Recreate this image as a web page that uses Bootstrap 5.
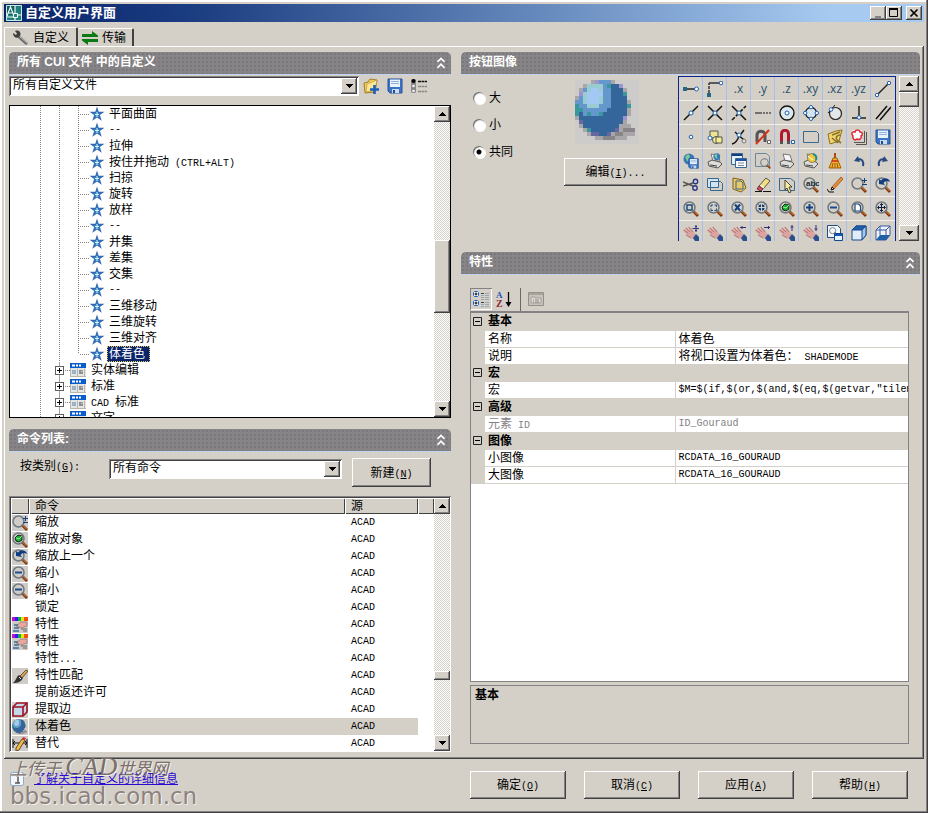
<!DOCTYPE html>
<html lang="zh-CN">
<head>
<meta charset="utf-8">
<meta name="viewport" content="width=device-width, initial-scale=1">
<title>自定义用户界面</title>
<link rel="stylesheet" href="https://cdn.jsdelivr.net/npm/bootstrap@5.3.0/dist/css/bootstrap.min.css">
<style>
:root{--face:#d4d0c8;--hi:#fff;--sh:#848284;--dk:#424142}
body{font-family:"Liberation Sans","Noto Sans CJK SC",sans-serif;font-size:12px;line-height:16px;color:#000;background:var(--face)}
svg{flex:none;display:block}
.ic{width:16px;height:16px}
.lat{font-family:"Liberation Mono",monospace;font-size:10px;white-space:pre}
span.lat{line-height:1}
.raised{background:var(--face);border:0;border-radius:0;box-shadow:inset -1px -1px var(--dk),inset 1px 1px var(--hi),inset -2px -2px var(--sh)}
.sunken{border:0;border-radius:0;box-shadow:inset 1px 1px var(--sh),inset -1px -1px var(--hi),inset 2px 2px var(--dk)}
.dialog{min-height:100vh;padding:4px;box-shadow:inset -1px -1px var(--dk),inset -2px -2px var(--sh),inset 2px 2px var(--hi)}
.titlebar{height:18px;padding:0 2px;background:linear-gradient(90deg,#0a246a,#1a3c80 20%,#a6caf0 90%);color:#fff}
.titlebar h1{font-size:13px;line-height:18px;font-weight:700;padding-left:3px}
.cap{width:16px;height:14px}
.tabs{padding-top:5px}
.tabbtn{background:none;border:0;border-top:1px solid var(--hi);border-right:2px solid var(--dk);height:18px;padding:0 6px 0 4px;border-radius:2px 2px 0 0;color:#000}
.tabbtn.on{height:20px;margin-bottom:-1px;border-left:1px solid var(--hi);background:var(--face);padding:0 7px}
.tabbtn.on span{padding-left:5px}
.page{box-shadow:inset -1px -1px var(--dk),inset 1px 1px var(--hi),inset -2px -2px var(--sh);padding:6px 4px 7px 5px}
.cols{display:grid;grid-template-columns:minmax(0,442fr) minmax(0,459fr);column-gap:10px}
.phead{height:23px;border-bottom:1px solid #c0d4f4;background:radial-gradient(#7a787a 30%,transparent 32%) 0 0/4px 4px,#868486;color:#fff;font-weight:700;border-radius:5px 5px 0 0;padding:0 5px 0 8px}
.phead h2{font-size:12px;line-height:20px;font-weight:700}
.phead button{background:none;border:0;padding:4px 0 0;color:#fff}
.filebar{padding:1px 0 9px}
.drop{position:relative}
.drop select{display:block;appearance:none;width:100%;height:20px;background:#fff;padding:0 20px 2px 4px;font-size:12px;line-height:16px;color:#000;outline:0}
.drop .arr{position:absolute;right:2px;top:2px;bottom:2px;width:16px;pointer-events:none}
.tri{width:7px;height:4px}
.sbar{width:16px;flex:none;background:repeating-conic-gradient(#fff 0 25%,#d4d0c8 0 50%) 0 0/2px 2px}
.sbar button{height:16px;padding:0}
.sbar.wide{width:20px;margin-left:3px;height:165px}
.t1{flex:118}.t2{flex:73}.t3{flex:88}
.u1{flex:158}.u2{flex:9}.u3{flex:55}
.v1{height:15px}
.tree{height:313px;border:1px solid #000;background:#fff}
.trow{height:16px;padding-left:30px;white-space:nowrap}
.guide{width:19px;height:16px;display:flex;align-items:center}
.guide::before{content:"";width:1px;height:16px;background:repeating-linear-gradient(#848284 0 1px,#fff 1px 2px)}
.guide.stub{width:11px}
.guide.stub::after{content:"";flex:1;height:1px;margin-top:1px;background:repeating-linear-gradient(90deg,#fff 0 1px,#848284 1px 2px)}
.guide.end::before{height:8px;align-self:flex-start}
.guide.knob::before{width:9px;margin-left:-4px;background:linear-gradient(#000,#000) 2px 8px/5px 1px no-repeat,linear-gradient(#000,#000) 4px 6px/1px 5px no-repeat,linear-gradient(#fff,#fff) 1px 5px/7px 7px no-repeat,linear-gradient(#606060,#606060) 0 4px/9px 9px no-repeat,linear-gradient(90deg,transparent 4px,#a0a0a0 4px 5px,transparent 5px)}
.trow .nm{margin-left:2px;padding:0 2px;line-height:16px}
.trow.fold .nm{padding-left:3px}
.trow .sel{background:#0a246a;color:#fff;outline:1px dotted #e8c860;outline-offset:-1px;padding-right:5px}
.cmdbar{padding:6px 20px 9px 11px}
.cmdbar .catlabel{width:89px;flex:none}
.cmdbar .drop{margin-top:1px}
.newbtn{width:79px;height:29px;margin-left:10px;flex:none}
.list{height:256px;background:#fff;padding:2px 1px 1px 2px}
.list table,.props table{table-layout:fixed;width:100%;border-collapse:collapse;margin:0}
.list th{height:16px;padding:0 6px;font-weight:400;line-height:14px;background:var(--face);box-shadow:inset 1px 1px var(--hi),inset -1px -1px var(--dk)}
.list td{height:17px;padding:0 6px;line-height:15px;white-space:nowrap}
.list td:first-child{padding:0 0 0 1px}
.list .picked td:not(:first-child):not(:last-child){background:var(--face)}
.list td:first-child svg{background:#cfccc8}
.c1{width:18px}.c3{width:73px}.c4{width:16px}
.radios{width:91px;padding-top:8px}
.radiorow{height:27px}
.radiorow input{appearance:none;width:12px;height:12px;margin:0;border-radius:50%;background:#fff;box-shadow:inset 1px 1px 1px #606060,1px 1px #fff}
.radiorow input:checked{background:radial-gradient(#000 0 2px,#fff 3px)}
.imgbody{padding:1px 1px 11px 12px}
.editcol{width:103px}
.editcol .preview{margin:4px 0 14px 11px}
.editcol .cmd{height:28px}
.gal{display:grid;grid-template-columns:repeat(9,24px);grid-auto-rows:24px;height:165px;overflow:hidden;border:1px solid #0a2490;border-bottom:0}
.gal button{background:none;border:0;border-right:1px solid #a8c0e8;border-bottom:1px solid #f4f2ee;padding:0;display:flex;align-items:center;justify-content:center;color:#28506c;font-family:"Open Sans",sans-serif;font-size:12px;line-height:16px}
.gal button:nth-child(9n){border-right:0}
.preview{width:64px;height:64px;background:#cdcccb}
.cmd{font-size:12px;line-height:16px;padding:0;color:#000}
.propbox{padding:13px 11px 8px 9px}
.toolstrip{height:24px;border-bottom:1px solid var(--sh)}
.toolstrip button{background:none;border:0;padding:2px;height:22px}
.toolstrip button.on{box-shadow:inset 1px 1px var(--sh),inset -1px -1px var(--hi)}
.props{border:1px solid var(--sh);background:#fff;margin-bottom:3px}
.props th,.props td{height:17px;line-height:16px;padding:0 3px;white-space:nowrap;overflow:hidden;font-weight:400;border-bottom:1px solid var(--face)}
.props td{border-left:1px solid var(--face)}
.props .gut{background:var(--face);padding:0 0 0 2px;border-left:0}
.props .cat th{background:var(--face);font-weight:700}
.props .dim th,.props .dim td{color:#848284}
.p1{width:14px}.p2{width:190px}
.hint{height:59px;border:1px solid var(--sh);font-weight:700;padding:1px 4px}
.foot{height:50px;padding:12px 16px 0 6px}
.foot .cmd{flex:0 1 96px;height:28px}
.foot a{color:#2a0ad0}
.acts{column-gap:18px}
.more{width:440px;position:relative}
.wm{position:absolute;color:#8d827e;text-shadow:1px 1px #f2efea;pointer-events:none;white-space:nowrap;line-height:20px}
.wm-a{left:0;top:-14px;font:italic 17px/20px "Liberation Serif","Noto Sans CJK SC",serif;color:#7a6e6a}
.wm-a b{font-weight:400;font-size:26px}
.wm-b{left:0;top:15px;font-family:"DejaVu Sans",sans-serif;font-size:23px}
</style>
<script src="https://cdn.jsdelivr.net/npm/bootstrap@5.3.0/dist/js/bootstrap.bundle.min.js"></script>
</head>
<body>
<svg class="d-none" xmlns="http://www.w3.org/2000/svg">
<defs>
<linearGradient id="gsheet" x2="1" y2="1"><stop offset="0" stop-color="#fff"/><stop offset="1" stop-color="#9ec8e4"/></linearGradient>
<radialGradient id="glens" cx=".35" cy=".35"><stop offset="0" stop-color="#fff"/><stop offset="1" stop-color="#a4c8e0"/></radialGradient>
</defs>
<symbol id="up" viewBox="0 0 7 4"><path d="M3 0h1v1h1v1h1v1h1v1H0V3h1V2h1V1h1z"/></symbol>
<symbol id="down" viewBox="0 0 7 4"><path d="M0 0h7v1H6v1H5v1H4v1H3V3H2V2H1V1H0z"/></symbol>
<symbol id="chev" viewBox="0 0 8 11"><path d="M1 5l3-3 3 3M1 10l3-3 3 3" fill="none" stroke="#fff" stroke-width="1.400"/></symbol>
<symbol id="star" viewBox="0 0 16 16"><path d="M8 .5l1.700 5.200h5.800l-4.600 3.400 1.800 5.600L8 11.400l-4.700 3.300 1.800-5.600L.5 5.700h5.800z" fill="#3868b4"/><path d="M8 4l1 3.300h3L9.600 9l.9 3L8 10.300l-2.500 1.700.900-3L4 7.300h3z" fill="#2c88c8"/><path d="M8 6v5M6 8.500h4" stroke="#d0f4ff"/></symbol>
<symbol id="tbar" viewBox="0 0 16 16"><path fill="#0a5ccc" d="M0 1h16v5H0z"/><path fill="#fff" d="M2 2.500h3v2H2zM6 2.500h2v2H6zM9 2.500h2v2H9z"/><path fill="#e8e6e0" d="M0 6h16v8H0z"/><path fill="#b8b4b0" d="M0 14h16v1H0zM0 6h1v8H0zM7 7h1v7H7zM14 7h1v7h-1z"/><path fill="#90b4c8" d="M2 8h4v4H2z"/><path fill="#8890a0" d="M9 8h4v4H9z"/><path fill="#d8c890" d="M11 9h2v1h-2z"/><path fill="#c8a8d0" d="M3 9h1v2H3z"/></symbol>
<symbol id="minus" viewBox="0 0 9 9"><path d="M.5.5h8v8h-8z" fill="none" stroke="#202020"/><path d="M2 4.500h5" stroke="#000"/></symbol>
<symbol id="app" viewBox="0 0 16 16"><path fill="#20807c" d="M0 0h16v16H0z"/><path d="M0 0h9v10H0z" fill="#145c5c"/><path d="M1 11L4.500 2 8 11M2 8h5M9 0v10h7M9 10v6M0 12h8" stroke="#e8fffc" fill="none" stroke-width="1.200"/><path d="M.5.5h15v15H.5z" fill="none" stroke="#c8e8e4"/><path d="M7.500 8.500h4v4h-4z" fill="#20807c" stroke="#fff"/></symbol>
<symbol id="wrench" viewBox="0 0 16 16"><path d="M6 6l9 8" stroke="#686868" stroke-width="3"/><path d="M7 6l8 7" stroke="#c4c4c4"/><path d="M1 3l3 2 1-1.500L3 1c3-1 5 0 5.500 2.500C9 6 6 8.500 3.500 7.500 2 7 1 5 1 3z" fill="#404040"/></symbol>
<symbol id="swap" viewBox="0 0 16 16"><path d="M0 4h10V1l6 4.500v1.500H0zM16 12H6v3L0 10.500V9h16z" fill="#0a7a14"/></symbol>
<symbol id="folder" viewBox="0 0 16 16"><path d="M1 5l4-1 2-3 7 1-2 12-10 1z" fill="#f0cc58" stroke="#a08028"/><path d="M4 6l10-4-2 10-9 2z" fill="#fae898" stroke="#b08c30" stroke-width=".6"/><path d="M11.500 7v9M7 11.500h9" stroke="#1c60b8" stroke-width="2.600"/></symbol>
<symbol id="disk" viewBox="0 0 16 16"><path d="M1 1h14v14H3l-2-2z" fill="#3c74c4" stroke="#28509c"/><path d="M3 1.500h10V9H3z" fill="#e8f2fa"/><path d="M4 3.500h8M4 5.500h8" stroke="#90b4dc"/><path d="M5 11h7v4H5z" fill="#c8dcf0"/><path d="M6 12h2v3H6z" fill="#284c90"/></symbol>
<symbol id="opts" viewBox="0 0 16 16"><path d="M0 2l1-1h3l1 1v12l-1 1H1l-1-1z" fill="#888"/><circle cx="2.500" cy="3" r="2" fill="#000"/><circle cx="2.500" cy="8" r="1.300" fill="#eee"/><circle cx="2.500" cy="13" r="1.300" fill="#eee"/><path d="M7 3.500h9" stroke="#111" stroke-width="1.500" stroke-dasharray="3 .5"/><path d="M7 8.500h9M7 13.500h9" stroke="#888" stroke-width="1.500" stroke-dasharray="3 .5"/></symbol>
<symbol id="ball" viewBox="0 0 16 16"><g stroke-width="1" shape-rendering="crispEdges" fill="none"><path stroke="#a8a6a8" d="M4 .5h1M9 .5h1M2 1.500h1M1 2.500h1M12 2.500h1M0 4.500h1M13 5.500h1M13 7.500h1M13 8.500h1M0 9.500h1M12 10.500h1M1 11.500h1M11 11.500h3M2 12.500h1M11 12.500h4M3 13.500h1M9 13.500h6M5 14.500h8"/><path stroke="#888488" d="M12 12.500h3M10 13.500h2M7 14.500h3"/><path stroke="#9c94cc" d="M5 .5h1M11 1.500h1M1 3.500h1M12 9.500h1"/><path stroke="#6498cc" d="M6 .5h3M7 1.500h1M2 2.500h1M7 2.500h2M7 3.500h2M1 4.500h1M7 4.500h2M0 5.500h2M7 5.500h2M1 6.500h2M6 6.500h3M2 7.500h6M2 8.500h5"/><path stroke="#98ccd0" d="M3 1.500h4M3 2.500h4M2 3.500h5M2 4.500h5M2 5.500h5M3 6.500h3"/><path stroke="#a4c8f4" d="M4 2.500h2M3 3.500h4M3 4.500h3M3 5.500h3"/><path stroke="#34669c" d="M9 1.500h2M9 2.500h3M9 3.500h3M9 4.500h4M9 5.500h4M9 6.500h4M8 7.500h5M7 8.500h6M1 8.500h1M1 9.500h11M2 10.500h10M2 11.500h9M4 12.500h6M6 13.500h3"/><path stroke="#38989c" d="M8 1.500h1M12 3.500h1M0 6.500h1M13 6.500h1M0 7.500h2M0 8.500h1M3 8.500h1M6 8.500h1M3 12.500h1"/><path stroke="#6868a0" d="M1 10.500h1M10 12.500h1M4 13.500h2M8 13.500h1"/></g></symbol>
<symbol id="mag" viewBox="0 0 16 16"><path d="M10 10l5 5" stroke="#7c3410" stroke-width="2.600"/><path d="M10 9.500l4.500 4.500" stroke="#e88830"/><circle cx="6.500" cy="6.500" r="5.500" fill="url(#glens)" stroke="#707880" stroke-width="1.500"/></symbol>
<symbol id="zin" viewBox="0 0 16 16"><use href="#mag"/><path d="M3 6.500h7M6.500 3v7" stroke="#104080" stroke-width="2"/></symbol>
<symbol id="zout" viewBox="0 0 16 16"><use href="#mag"/><path d="M3 6.500h7" stroke="#1c4c90" stroke-width="2"/></symbol>
<symbol id="zrt" viewBox="0 0 16 16"><use href="#mag"/><path d="M11 3.500h5M13.500 1v5M11 7.500h5" stroke="#104080"/></symbol>
<symbol id="zprev" viewBox="0 0 16 16"><use href="#mag"/><path d="M4 7V2l2 1.500C9 0 14 1 15 5c-3-2-5-1-6.500 1L10 8z" fill="#103c80"/></symbol>
<symbol id="zwin" viewBox="0 0 16 16"><use href="#mag"/><path d="M4 4h5v5H4z" fill="none" stroke="#1c4c80" stroke-width="1.500"/></symbol>
<symbol id="zext" viewBox="0 0 16 16"><use href="#mag"/><path d="M4 6V4h2M7.500 4h2v2M9.500 7.500v2h-2M6 9.500H4v-2" fill="none" stroke="#1c4c80"/></symbol>
<symbol id="zx" viewBox="0 0 16 16"><use href="#mag"/><path d="M4 3.500l5 6M9 3.500l-5 6" stroke="#104080" stroke-width="2"/></symbol>
<symbol id="zctr" viewBox="0 0 16 16"><use href="#mag"/><path d="M3.500 3.500l2 2m0-2v2h-2M9.500 3.500l-2 2m0-2v2h2M3.500 9.500l2-2m0 2v-2h-2M9.500 9.500l-2-2m0 2v-2h2" stroke="#103870" fill="none"/></symbol>
<symbol id="zobj" viewBox="0 0 16 16"><use href="#mag"/><path d="M3 6l3-3 4 1v4L7 10 4 9z" fill="#18b030" stroke="#000" stroke-width=".8"/><path d="M4 6l3 1 3-3" stroke="#b0ffb0" fill="none" stroke-width=".8"/></symbol>
<symbol id="zpage" viewBox="0 0 16 16"><use href="#mag"/><path d="M4 3h3.500L9.500 5v5H4z" fill="#fff" stroke="#1c4c80" stroke-width="1.200"/></symbol>
<symbol id="zall" viewBox="0 0 16 16"><use href="#mag"/><path d="M2.500 6.500h8M6.500 2.500v8M5 4l1.500-1.500L8 4M5 9l1.500 1.500L8 9M4 5L2.500 6.500 4 8M9 5l1.500 1.500L9 8" fill="none" stroke="#102040"/></symbol>
<symbol id="find" viewBox="0 0 16 16"><use href="#mag"/><text x="3" y="9" font-size="8" font-weight="700" font-family="Liberation Sans" fill="#102838">abc</text></symbol>
<symbol id="hand" viewBox="0 0 16 16"><path d="M0 5l1-1 3 2-2-3 1-1 4 4-2-4 1.200-.6L11 7l2 3-2 4-4-1-4-3 .5-1L1 7z" fill="#dca4a0"/><path d="M1 5l4 3M3 3l4 4M3 10l5 3M6 2l4 5" stroke="#a86c68" stroke-width=".8" fill="none"/><path d="M10 13l3-4 3 3v4h-4z" fill="#285090"/></symbol>
<symbol id="h4" viewBox="0 0 16 16"><use href="#hand"/><path d="M13 0v7M9.500 3.500h7M12 1.500h2M12 5.500h2" stroke="#303078"/></symbol>
<symbol id="hl" viewBox="0 0 16 16"><use href="#hand"/><path d="M9 2.500h6M11 1v3" stroke="#303078"/></symbol>
<symbol id="hr" viewBox="0 0 16 16"><use href="#hand"/><path d="M9 2.500h6M13.500 1v3" stroke="#303078"/></symbol>
<symbol id="hu" viewBox="0 0 16 16"><use href="#hand"/><path d="M13 0v6M11.500 2h3" stroke="#303078"/></symbol>
<symbol id="hd" viewBox="0 0 16 16"><use href="#hand"/><path d="M13 0v6M11.500 4h3" stroke="#303078"/></symbol>
<symbol id="s1" viewBox="0 0 16 16"><path d="M3 8h9" stroke="#222" stroke-width="1.500"/><path d="M0 6h4v4H0z" fill="#206888"/><circle cx="13.500" cy="8" r="2" fill="#fff" stroke="#1c60b8"/></symbol>
<symbol id="s2" viewBox="0 0 16 16"><path d="M2 12V2" stroke="#333" stroke-width="1.500" stroke-dasharray="3 1"/><path d="M2 2h11" stroke="#333" stroke-width="1.500"/><path d="M0 12h4v4H0z" fill="#206888"/><circle cx="14" cy="2" r="1.800" fill="#fff" stroke="#1c60b8"/></symbol>
<symbol id="s3" viewBox="0 0 16 16"><path d="M2 14L14 2" stroke="#222" stroke-width="1.500"/><circle cx="2" cy="14" r="1.700" fill="#fff" stroke="#1c60b8"/><circle cx="14" cy="2" r="1.700" fill="#fff" stroke="#1c60b8"/></symbol>
<symbol id="s4" viewBox="0 0 16 16"><path d="M1 15L15 1" stroke="#111" stroke-width="1.500"/><circle cx="8" cy="8" r="2" fill="#fff" stroke="#1c60b8"/></symbol>
<symbol id="s5" viewBox="0 0 16 16"><path d="M1 1l14 14M1 15L15 1" stroke="#111" stroke-width="1.500"/><circle cx="8" cy="8" r="2" fill="#fff" stroke="#1c60b8"/></symbol>
<symbol id="s6" viewBox="0 0 16 16"><path d="M1 1l14 14" stroke="#111" stroke-width="1.500"/><path d="M1 15L15 1" stroke="#111" stroke-width="1.500" stroke-dasharray="4 1.500"/><circle cx="8" cy="8" r="2" fill="#fff" stroke="#1c60b8"/></symbol>
<symbol id="s7" viewBox="0 0 16 16"><path d="M0 8h7" stroke="#111"/><path d="M8 8h8" stroke="#111" stroke-dasharray="2 1"/></symbol>
<symbol id="s8" viewBox="0 0 16 16"><circle cx="8" cy="8" r="7" fill="#dce8ec" stroke="#111" stroke-width="1.300"/><circle cx="8" cy="8" r="2" fill="#fff" stroke="#1c60b8"/></symbol>
<symbol id="s9" viewBox="0 0 16 16"><circle cx="8" cy="8" r="5.500" fill="#d4e4ec" stroke="#111" stroke-width="1.300"/><g fill="#fff" stroke="#1c60b8"><circle cx="8" cy="2.200" r="1.700"/><circle cx="8" cy="13.800" r="1.700"/><circle cx="2.200" cy="8" r="1.700"/><circle cx="13.800" cy="8" r="1.700"/></g></symbol>
<symbol id="s10" viewBox="0 0 16 16"><circle cx="8.500" cy="8.500" r="6" fill="#e4e8e8" stroke="#222" stroke-width="1.200"/><path d="M1 8L8 0" stroke="#222"/><circle cx="4" cy="4.500" r="1.800" fill="#fff" stroke="#1c60b8"/></symbol>
<symbol id="s11" viewBox="0 0 16 16"><path d="M8 1v10M1 13h14" stroke="#222" stroke-width="1.500"/><circle cx="8" cy="12.500" r="1.800" fill="#fff" stroke="#1c60b8"/></symbol>
<symbol id="s12" viewBox="0 0 16 16"><path d="M1 14L12 1M5 15L16 2" stroke="#111" stroke-width="1.500"/></symbol>
<symbol id="s13" viewBox="0 0 16 16"><circle cx="8" cy="8" r="1.800" fill="#fff" stroke="#1c60b8"/></symbol>
<symbol id="s14" viewBox="0 0 16 16"><path d="M3 2h8v7H3z" fill="#ece490" stroke="#555"/><circle cx="9" cy="11" r="3.500" fill="#f4ec90" stroke="#555"/><path d="M9 8h6v6H9z" fill="#f4ec90" stroke="#555"/><circle cx="3" cy="9" r="2" fill="#fff" stroke="#1c60b8"/></symbol>
<symbol id="s15" viewBox="0 0 16 16"><path d="M1 15c4-1 6-5 7-8M10 5l3-4M4 3l9 8" stroke="#111" stroke-width="1.400" fill="none"/><circle cx="8" cy="6" r="2" fill="#fff" stroke="#1c60b8"/><circle cx="13" cy="12" r="2" fill="#ddd" stroke="#777"/></symbol>
<symbol id="s16" viewBox="0 0 16 16"><path d="M2 13V6c0-5 8-5 8 0v7" fill="none" stroke="#555" stroke-width="3"/><path d="M1 15L14 1" stroke="#d83018" stroke-width="2"/><path d="M12.500 11.500h3v3h-3z" fill="#fff" stroke="#666"/></symbol>
<symbol id="s17" viewBox="0 0 16 16"><path d="M2.500 14V5c0-5 7-5 7 0v9" fill="none" stroke="#b01830" stroke-width="3"/><path d="M1 12h3v3H1zM8 12h3v3H8z" fill="#555"/><path d="M12.500 11.500h3v3h-3z" fill="#fff" stroke="#1c60b8"/></symbol>
<symbol id="s18" viewBox="0 0 16 16"><path d="M.5 2.500h13l2 2v9H.5z" fill="url(#gsheet)" stroke="#386890"/></symbol>
<symbol id="s19" viewBox="0 0 16 16"><path d="M1 5l8-3 6-1-3 11-9 3z" fill="#f0d470" stroke="#907020"/><path d="M5 6l8-3M5 9l6 5M13 6c-3 0-5 3-3 5l4 3" stroke="#887028" stroke-width="1.600" fill="none"/></symbol>
<symbol id="s20" viewBox="0 0 16 16"><path d="M5 15.500h10.500V3M3 13.500h10.500V2" fill="none" stroke="#555"/><path d="M1 1h10v10H1z" fill="#f8eaea"/><path d="M2 7C0 5 1 2 4 3c1-3 5-2 5 0 3 0 3 3 1 4 1 3-2 4-4 3-2 2-5 0-4-3z" fill="#fff" stroke="#e02838" stroke-width="1.500"/></symbol>
<symbol id="globe" viewBox="0 0 16 16"><circle cx="6" cy="6" r="5.500" fill="#3478b8"/><path d="M2 4l3-3 2 2-1 3 2 3-4-1z" fill="#80c898"/></symbol>
<symbol id="s21" viewBox="0 0 16 16"><use href="#globe"/><svg x="5" y="5" width="11" height="11"><use href="#disk" width="11" height="11"/></svg></symbol>
<symbol id="print" viewBox="0 0 16 16"><path d="M4 1l7 1 2 6H6z" fill="#f6f6f6" stroke="#777"/><path d="M1 9l4-2 8 2 2 2-4 4-9-2z" fill="#dcdcd8" stroke="#555"/><path d="M3 12l7 1" stroke="#444"/></symbol>
<symbol id="s22" viewBox="0 0 16 16"><use href="#print"/><svg x="6" y="0" width="10" height="10"><use href="#globe" width="10" height="10"/></svg></symbol>
<symbol id="s23" viewBox="0 0 16 16"><path d="M.5.5h11v11H.5z" fill="#e4f0f8" stroke="#386890"/><path d="M1 2h10" stroke="#103c80" stroke-width="2"/><path d="M4.500 5.500h11v9h-11z" fill="#f8fcff" stroke="#386890"/><path d="M5 7h10" stroke="#2050a0" stroke-width="2"/><path d="M7 10h6M7 12.500h6" stroke="#789"/></symbol>
<symbol id="s24" viewBox="0 0 16 16"><path d="M.5.5h11l3 3v10H.5z" fill="url(#gsheet)" stroke="#6888a0"/><svg x="5" y="5" width="11" height="11"><use href="#mag" width="11" height="11"/></svg></symbol>
<symbol id="s25" viewBox="0 0 16 16"><use href="#print"/><circle cx="9" cy="5" r="4.500" fill="#f0c838" stroke="#886"/><path d="M10 1c3 1 4 3 3 6" stroke="#208898" stroke-width="2" fill="none"/><path d="M5 3l5 4" stroke="#fff"/></symbol>
<symbol id="s26" viewBox="0 0 16 16"><path d="M8 0v5" stroke="#b04818" stroke-width="2"/><path d="M6 5h4l4 10H2z" fill="#f0b028" stroke="#9c6010"/><path d="M5 8h6" stroke="#c82818" stroke-width="1.500"/><path d="M6 10l-1 5M8 10v5M10 10l1 5" stroke="#a05c10"/></symbol>
<symbol id="undo" viewBox="0 0 16 16"><path d="M12 13c1-5-1-7-5-7" fill="none" stroke="#284880" stroke-width="2"/><path d="M3 8l4-5 2 6z" fill="#284880"/></symbol>
<symbol id="redo" viewBox="0 0 16 16"><path d="M4 13C3 8 5 6 9 6" fill="none" stroke="#284880" stroke-width="2"/><path d="M13 8L9 3 7 9z" fill="#284880"/></symbol>
<symbol id="cut" viewBox="0 0 16 16"><path d="M0 5l10 4M0 9l10-3" stroke="#555" stroke-width="1.600"/><circle cx="12.500" cy="4.500" r="2.200" fill="none" stroke="#283880" stroke-width="1.400"/><circle cx="12" cy="11" r="2.200" fill="none" stroke="#283880" stroke-width="1.400"/></symbol>
<symbol id="copy" viewBox="0 0 16 16"><path d="M.5 1.500h11v9H.5z" fill="#cfe4f0" stroke="#386890"/><path d="M3.500 4.500h10l2 2v7h-12z" fill="url(#gsheet)" stroke="#386890"/></symbol>
<symbol id="paste" viewBox="0 0 16 16"><path d="M2 1l10 2 3 8-5 4-8-3z" fill="#e8c868" stroke="#806020"/><path d="M5 4h5l2 2v6H5z" fill="url(#gsheet)" stroke="#386890"/></symbol>
<symbol id="erase" viewBox="0 0 16 16"><path d="M0 14.500h7M8 14.500h8" stroke="#111"/><path d="M4 9l7-8 4 3-7 8z" fill="#f4e080" stroke="#554"/><path d="M4 9l4 3-2 2-4-2z" fill="#d85060" stroke="#634"/><path d="M5 8l4 3" stroke="#fff"/></symbol>
<symbol id="select" viewBox="0 0 16 16"><path d="M.5 1.500h11l4 3v9H.5z" fill="url(#gsheet)" stroke="#386890"/><path d="M6 3v10l2-2 2 5 2-1-2-5h3z" fill="#f8f0a0" stroke="#222" stroke-width=".8"/></symbol>
<symbol id="pen" viewBox="0 0 16 16"><path d="M5 10L14 0l2 2-9 10z" fill="#e89038" stroke="#884010" stroke-width=".7"/><path d="M4 13l1-3 2 2zM0 12l2 3h5" stroke="#111" fill="none"/></symbol>
<symbol id="brush" viewBox="0 0 16 16"><path d="M8 8l6-6 2 1-6 7z" fill="#e8a050" stroke="#653"/><path d="M7 7l4 3c-2 4-5 5-10 5 3-2 3-6 6-8z" fill="#333"/><path d="M7 9l2 2" stroke="#eee"/></symbol>
<symbol id="rainbow" viewBox="0 0 16 16"><path d="M0 0h3v4H0z" fill="#c010d0"/><path d="M3 0h3v4H3z" fill="#3020e0"/><path d="M6 0h3v4H6z" fill="#10b050"/><path d="M9 0h3v4H9z" fill="#f0e010"/><path d="M12 0h4v4h-4z" fill="#f05010"/><path d="M4 9l5-4 6 0v4l-6 2z" fill="#e8a8a0" stroke="#865" stroke-width=".6"/><path d="M2 8h4M2 11h5M1 14h6" stroke="#386ca0" stroke-width="1.500"/><path d="M9 12h6M11 14h4" stroke="#666"/></symbol>
<symbol id="redbox" viewBox="0 0 16 16"><path d="M1 5l4-4h10v9l-4 4H1z" fill="#c4d8ec" stroke="#a01020" stroke-width="1.600"/><path d="M1 5h10v9M11 5l4-4" fill="none" stroke="#a01020" stroke-width="1.600"/></symbol>
<symbol id="dimpen" viewBox="0 0 16 16"><path d="M1 3v9M15 3v9M1 7h14M3 5L1 7l2 2M13 5l2 2-2 2" stroke="#111" fill="none"/><path d="M4 12L10 3l3 1-6 10-3 1z" fill="#f0c040" stroke="#643"/><path d="M10 3l1-2 3 1-1 2z" fill="#d83030"/></symbol>
<symbol id="docs" viewBox="0 0 16 16"><path d="M.5.5h10l3 3v9H.5z" fill="#f2f8fc" stroke="#205080"/><svg x="2" y="2" width="9" height="9"><use href="#mag" width="9" height="9"/></svg><path d="M7.500 8.500h8v7h-8z" fill="#e8f4fc" stroke="#104890"/><path d="M8 10h7" stroke="#1858b0" stroke-width="2"/></symbol>
<symbol id="cubet" viewBox="0 0 16 16"><path d="M1 5l4-4h10v9l-4 5H1z" fill="#e0ecf8" stroke="#184890"/><path d="M1 5l4-4h10l-4 4z" fill="#2060a8" stroke="#184890"/><path d="M11 5l4-4v9l-4 5z" fill="#a8c8e8" stroke="#184890"/></symbol>
<symbol id="cubeb" viewBox="0 0 16 16"><path d="M1 5l4-4h10v9l-4 5H1z" fill="#f0f4fa" stroke="#3858a0"/><path d="M1 15l4-5h10l-4 5z" fill="#2060a8"/><path d="M1 5h10v10M11 5l4-4M5 1v9" fill="none" stroke="#3858a0"/></symbol>
<symbol id="catg" viewBox="0 0 18 18"><g fill="#fff" stroke="#1c60c0"><path d="M1.500 2.500l1-1h3l1 1v3l-1 1h-3l-1-1zM1.500 11.500l1-1h3l1 1v3l-1 1h-3l-1-1z"/></g><path d="M2.500 4h3M4 2.500v3M2.500 13h3M4 11.500v3" stroke="#000"/><path d="M9 3.500h3M9 12.500h3" stroke="#444"/><path d="M9 5.500h3M9 7.500h3M9 9.500h3M9 14.500h3M9 16.500h3M13 3.500h4M13 5.500h4M13 7.500h4M13 9.500h4M13 12.500h4M13 14.500h4M13 16.500h4" stroke="#98a8b0"/></symbol>
<symbol id="az" viewBox="0 0 18 18"><text x="2" y="8" font-size="9" font-weight="700" font-family="Liberation Serif" fill="#2858b0">A</text><text x="2" y="17" font-size="10" font-weight="700" font-family="Liberation Serif" fill="#902838">Z</text><path d="M14.500 2v11" stroke="#000" stroke-width="1.300"/><path d="M11.500 12h6l-3 5z"/></symbol>
<symbol id="pgs" viewBox="0 0 18 18"><path d="M1.500 2.500h15v13h-15z" fill="#c8c4bc" stroke="#949088"/><path d="M2 4h14" stroke="#a8a49c" stroke-width="2"/><path d="M4 7h4v1h6v5H4z" fill="#dedad4" stroke="#a4a098"/><path d="M6 10h1M8 10h4M6 12h1M8 12h4" stroke="#888"/></symbol>
</svg>

<div class="dialog d-flex flex-column">
  <header class="titlebar d-flex align-items-center">
    <svg class="ic"><use href="#app"/></svg>
    <h1 class="m-0 flex-fill">自定义用户界面</h1>
    <button class="raised cap p-0" type="button" aria-label="最小化"><svg width="16" height="14"><path d="M5 10h6v2H5z" fill="#848284"/></svg></button>
    <button class="raised cap p-0" type="button" aria-label="最大化"><svg width="16" height="14"><path d="M3.500 3.500h8v7h-8z" fill="none" stroke="#000"/><path d="M3 3h9" stroke="#000" stroke-width="2"/></svg></button>
    <button class="raised cap p-0 ms-1" type="button" aria-label="关闭"><svg width="16" height="14"><path d="M4.500 3.500l7 7M11.500 3.500l-7 7" stroke="#000" stroke-width="1.700"/></svg></button>
  </header>
  <nav class="tabs d-flex align-items-end">
    <button type="button" class="tabbtn on d-flex align-items-center"><svg class="ic"><use href="#wrench"/></svg><span>自定义</span></button>
    <button type="button" class="tabbtn d-flex align-items-center gap-1"><svg class="ic"><use href="#swap"/></svg><span>传输</span></button>
  </nav>

  <main class="page cols flex-fill">
    <section class="d-flex flex-column">
      <div class="phead d-flex justify-content-between align-items-start"><h2 class="m-0">所有 CUI 文件 中的自定义</h2><button type="button" aria-label="折叠"><svg width="10" height="13"><use href="#chev"/></svg></button></div>
      <div class="filebar d-flex align-items-center">
        <div class="drop flex-fill"><select class="sunken" aria-label="自定义文件"><option>所有自定义文件</option></select><span class="arr raised d-flex align-items-center justify-content-center"><svg class="tri"><use href="#down"/></svg></span></div>
        <div class="d-flex gap-2 ps-1 pe-4"><svg class="ic"><use href="#folder"/></svg><svg class="ic"><use href="#disk"/></svg><svg class="ic"><use href="#opts"/></svg></div>
      </div>
      <div class="tree d-flex">
        <div class="flex-fill overflow-hidden">
          <div class="trow d-flex align-items-center"><i class="guide"></i><i class="guide"></i><i class="guide stub"></i><svg class="ic"><use href="#star"/></svg><span class="nm">平面曲面</span></div>
          <div class="trow d-flex align-items-center"><i class="guide"></i><i class="guide"></i><i class="guide stub"></i><svg class="ic"><use href="#star"/></svg><span class="nm lat">--</span></div>
          <div class="trow d-flex align-items-center"><i class="guide"></i><i class="guide"></i><i class="guide stub"></i><svg class="ic"><use href="#star"/></svg><span class="nm">拉伸</span></div>
          <div class="trow d-flex align-items-center"><i class="guide"></i><i class="guide"></i><i class="guide stub"></i><svg class="ic"><use href="#star"/></svg><span class="nm">按住并拖动<span class="lat"> (CTRL+ALT)</span></span></div>
          <div class="trow d-flex align-items-center"><i class="guide"></i><i class="guide"></i><i class="guide stub"></i><svg class="ic"><use href="#star"/></svg><span class="nm">扫掠</span></div>
          <div class="trow d-flex align-items-center"><i class="guide"></i><i class="guide"></i><i class="guide stub"></i><svg class="ic"><use href="#star"/></svg><span class="nm">旋转</span></div>
          <div class="trow d-flex align-items-center"><i class="guide"></i><i class="guide"></i><i class="guide stub"></i><svg class="ic"><use href="#star"/></svg><span class="nm">放样</span></div>
          <div class="trow d-flex align-items-center"><i class="guide"></i><i class="guide"></i><i class="guide stub"></i><svg class="ic"><use href="#star"/></svg><span class="nm lat">--</span></div>
          <div class="trow d-flex align-items-center"><i class="guide"></i><i class="guide"></i><i class="guide stub"></i><svg class="ic"><use href="#star"/></svg><span class="nm">并集</span></div>
          <div class="trow d-flex align-items-center"><i class="guide"></i><i class="guide"></i><i class="guide stub"></i><svg class="ic"><use href="#star"/></svg><span class="nm">差集</span></div>
          <div class="trow d-flex align-items-center"><i class="guide"></i><i class="guide"></i><i class="guide stub"></i><svg class="ic"><use href="#star"/></svg><span class="nm">交集</span></div>
          <div class="trow d-flex align-items-center"><i class="guide"></i><i class="guide"></i><i class="guide stub"></i><svg class="ic"><use href="#star"/></svg><span class="nm lat">--</span></div>
          <div class="trow d-flex align-items-center"><i class="guide"></i><i class="guide"></i><i class="guide stub"></i><svg class="ic"><use href="#star"/></svg><span class="nm">三维移动</span></div>
          <div class="trow d-flex align-items-center"><i class="guide"></i><i class="guide"></i><i class="guide stub"></i><svg class="ic"><use href="#star"/></svg><span class="nm">三维旋转</span></div>
          <div class="trow d-flex align-items-center"><i class="guide"></i><i class="guide"></i><i class="guide stub"></i><svg class="ic"><use href="#star"/></svg><span class="nm">三维对齐</span></div>
          <div class="trow d-flex align-items-center"><i class="guide"></i><i class="guide"></i><i class="guide stub end"></i><svg class="ic"><use href="#star"/></svg><span class="nm sel">体着色</span></div>
          <div class="trow d-flex align-items-center fold"><i class="guide"></i><i class="guide stub knob"></i><svg class="ic"><use href="#tbar"/></svg><span class="nm">实体编辑</span></div>
          <div class="trow d-flex align-items-center fold"><i class="guide"></i><i class="guide stub knob"></i><svg class="ic"><use href="#tbar"/></svg><span class="nm">标准</span></div>
          <div class="trow d-flex align-items-center fold"><i class="guide"></i><i class="guide stub knob"></i><svg class="ic"><use href="#tbar"/></svg><span class="nm"><span class="lat">CAD </span>标准</span></div>
          <div class="trow d-flex align-items-center fold"><i class="guide"></i><i class="guide stub knob"></i><svg class="ic"><use href="#tbar"/></svg><span class="nm">文字</span></div>
        </div>
        <div class="sbar d-flex flex-column">
          <button class="raised d-flex align-items-center justify-content-center" type="button" aria-label="上"><svg class="tri"><use href="#up"/></svg></button>
          <i class="t1"></i><i class="raised t2"></i><i class="t3"></i>
          <button class="raised d-flex align-items-center justify-content-center" type="button" aria-label="下"><svg class="tri"><use href="#down"/></svg></button>
        </div>
      </div>

      <div class="phead d-flex justify-content-between align-items-start mt-auto"><h2 class="m-0">命令列表:</h2><button type="button" aria-label="折叠"><svg width="10" height="13"><use href="#chev"/></svg></button></div>
      <div class="cmdbar d-flex align-items-start">
        <label class="catlabel" for="cat">按类别<span class="lat">(<u>G</u>):</span></label>
        <div class="drop flex-fill"><select class="sunken" id="cat"><option>所有命令</option></select><span class="arr raised d-flex align-items-center justify-content-center"><svg class="tri"><use href="#down"/></svg></span></div>
        <button type="button" class="btn raised cmd newbtn">新建<span class="lat">(<u>N</u>)</span></button>
      </div>
      <div class="list sunken d-flex">
        <div class="flex-fill overflow-hidden">
        <table>
          <colgroup><col class="c1"><col><col class="c3"><col class="c4"></colgroup>
          <thead><tr><th></th><th>命令</th><th>源</th><th></th></tr></thead>
          <tbody>
          <tr><td><svg class="ic"><use href="#zrt"/></svg></td><td>缩放</td><td class="lat">ACAD</td><td></td></tr>
          <tr><td><svg class="ic"><use href="#zobj"/></svg></td><td>缩放对象</td><td class="lat">ACAD</td><td></td></tr>
          <tr><td><svg class="ic"><use href="#zprev"/></svg></td><td>缩放上一个</td><td class="lat">ACAD</td><td></td></tr>
          <tr><td><svg class="ic"><use href="#zout"/></svg></td><td>缩小</td><td class="lat">ACAD</td><td></td></tr>
          <tr><td><svg class="ic"><use href="#zout"/></svg></td><td>缩小</td><td class="lat">ACAD</td><td></td></tr>
          <tr><td></td><td>锁定</td><td class="lat">ACAD</td><td></td></tr>
          <tr><td><svg class="ic"><use href="#rainbow"/></svg></td><td>特性</td><td class="lat">ACAD</td><td></td></tr>
          <tr><td><svg class="ic"><use href="#rainbow"/></svg></td><td>特性</td><td class="lat">ACAD</td><td></td></tr>
          <tr><td></td><td>特性<span class="lat">...</span></td><td class="lat">ACAD</td><td></td></tr>
          <tr><td><svg class="ic"><use href="#brush"/></svg></td><td>特性匹配</td><td class="lat">ACAD</td><td></td></tr>
          <tr><td></td><td>提前返还许可</td><td class="lat">ACAD</td><td></td></tr>
          <tr><td><svg class="ic"><use href="#redbox"/></svg></td><td>提取边</td><td class="lat">ACAD</td><td></td></tr>
          <tr class="picked"><td><svg class="ic"><use href="#ball"/></svg></td><td>体着色</td><td class="lat">ACAD</td><td></td></tr>
          <tr><td><svg class="ic"><use href="#dimpen"/></svg></td><td>替代</td><td class="lat">ACAD</td><td></td></tr>
          </tbody>
        </table>
        </div>
        <div class="sbar d-flex flex-column">
          <button class="raised d-flex align-items-center justify-content-center" type="button" aria-label="上"><svg class="tri"><use href="#up"/></svg></button>
          <i class="u1"></i><i class="raised u2"></i><i class="u3"></i>
          <button class="raised d-flex align-items-center justify-content-center" type="button" aria-label="下"><svg class="tri"><use href="#down"/></svg></button>
        </div>
      </div>
    </section>

    <section class="d-flex flex-column">
      <div class="phead"><h2 class="m-0">按钮图像</h2></div>
      <div class="d-flex imgbody">
        <div class="radios">
          <div class="radiorow d-flex align-items-center gap-1"><input type="radio" name="size" id="r1"><label for="r1">大</label></div>
          <div class="radiorow d-flex align-items-center gap-1"><input type="radio" name="size" id="r2"><label for="r2">小</label></div>
          <div class="radiorow d-flex align-items-center gap-1"><input type="radio" name="size" id="r3" checked><label for="r3">共同</label></div>
        </div>
        <div class="editcol">
          <svg class="preview"><use href="#ball"/></svg>
          <button type="button" class="btn raised cmd w-100">编辑<span class="lat">(<u>I</u>)...</span></button>
        </div>
        <div class="gal ms-auto">
          <button type="button"><svg class="ic"><use href="#s1"/></svg></button><button type="button"><svg class="ic"><use href="#s2"/></svg></button><button type="button">.x</button><button type="button">.y</button><button type="button">.z</button><button type="button">.xy</button><button type="button">.xz</button><button type="button">.yz</button><button type="button"><svg class="ic"><use href="#s3"/></svg></button>
          <button type="button"><svg class="ic"><use href="#s4"/></svg></button><button type="button"><svg class="ic"><use href="#s5"/></svg></button><button type="button"><svg class="ic"><use href="#s6"/></svg></button><button type="button"><svg class="ic"><use href="#s7"/></svg></button><button type="button"><svg class="ic"><use href="#s8"/></svg></button><button type="button"><svg class="ic"><use href="#s9"/></svg></button><button type="button"><svg class="ic"><use href="#s10"/></svg></button><button type="button"><svg class="ic"><use href="#s11"/></svg></button><button type="button"><svg class="ic"><use href="#s12"/></svg></button>
          <button type="button"><svg class="ic"><use href="#s13"/></svg></button><button type="button"><svg class="ic"><use href="#s14"/></svg></button><button type="button"><svg class="ic"><use href="#s15"/></svg></button><button type="button"><svg class="ic"><use href="#s16"/></svg></button><button type="button"><svg class="ic"><use href="#s17"/></svg></button><button type="button"><svg class="ic"><use href="#s18"/></svg></button><button type="button"><svg class="ic"><use href="#s19"/></svg></button><button type="button"><svg class="ic"><use href="#s20"/></svg></button><button type="button"><svg class="ic"><use href="#disk"/></svg></button>
          <button type="button"><svg class="ic"><use href="#s21"/></svg></button><button type="button"><svg class="ic"><use href="#s22"/></svg></button><button type="button"><svg class="ic"><use href="#s23"/></svg></button><button type="button"><svg class="ic"><use href="#s24"/></svg></button><button type="button"><svg class="ic"><use href="#print"/></svg></button><button type="button"><svg class="ic"><use href="#s25"/></svg></button><button type="button"><svg class="ic"><use href="#s26"/></svg></button><button type="button"><svg class="ic"><use href="#undo"/></svg></button><button type="button"><svg class="ic"><use href="#redo"/></svg></button>
          <button type="button"><svg class="ic"><use href="#cut"/></svg></button><button type="button"><svg class="ic"><use href="#copy"/></svg></button><button type="button"><svg class="ic"><use href="#paste"/></svg></button><button type="button"><svg class="ic"><use href="#erase"/></svg></button><button type="button"><svg class="ic"><use href="#select"/></svg></button><button type="button"><svg class="ic"><use href="#find"/></svg></button><button type="button"><svg class="ic"><use href="#pen"/></svg></button><button type="button"><svg class="ic"><use href="#zrt"/></svg></button><button type="button"><svg class="ic"><use href="#zprev"/></svg></button>
          <button type="button"><svg class="ic"><use href="#zwin"/></svg></button><button type="button"><svg class="ic"><use href="#zext"/></svg></button><button type="button"><svg class="ic"><use href="#zx"/></svg></button><button type="button"><svg class="ic"><use href="#zctr"/></svg></button><button type="button"><svg class="ic"><use href="#zobj"/></svg></button><button type="button"><svg class="ic"><use href="#zin"/></svg></button><button type="button"><svg class="ic"><use href="#zout"/></svg></button><button type="button"><svg class="ic"><use href="#zpage"/></svg></button><button type="button"><svg class="ic"><use href="#zall"/></svg></button>
          <button type="button"><svg class="ic"><use href="#h4"/></svg></button><button type="button"><svg class="ic"><use href="#hand"/></svg></button><button type="button"><svg class="ic"><use href="#hl"/></svg></button><button type="button"><svg class="ic"><use href="#hr"/></svg></button><button type="button"><svg class="ic"><use href="#hu"/></svg></button><button type="button"><svg class="ic"><use href="#hd"/></svg></button><button type="button"><svg class="ic"><use href="#docs"/></svg></button><button type="button"><svg class="ic"><use href="#cubet"/></svg></button><button type="button"><svg class="ic"><use href="#cubeb"/></svg></button>
        </div>
        <div class="sbar wide d-flex flex-column">
          <button class="raised d-flex align-items-center justify-content-center" type="button" aria-label="上"><svg class="tri"><use href="#up"/></svg></button>
          <i class="raised v1"></i><i class="flex-fill"></i>
          <button class="raised d-flex align-items-center justify-content-center" type="button" aria-label="下"><svg class="tri"><use href="#down"/></svg></button>
        </div>
      </div>

      <div class="phead d-flex justify-content-between align-items-start"><h2 class="m-0">特性</h2><button type="button" aria-label="折叠"><svg width="10" height="13"><use href="#chev"/></svg></button></div>
      <div class="propbox d-flex flex-column flex-fill">
        <div class="toolstrip d-flex">
          <button type="button" class="on" aria-label="按分类"><svg width="18" height="18"><use href="#catg"/></svg></button>
          <button type="button" class="pe-1" aria-label="按字母"><svg width="18" height="18"><use href="#az"/></svg></button>
          <span class="vr mx-1 opacity-50"></span>
          <button type="button" aria-label="属性页"><svg width="18" height="18"><use href="#pgs"/></svg></button>
        </div>
        <div class="props flex-fill">
          <table>
            <colgroup><col class="p1"><col class="p2"><col></colgroup>
            <tbody>
            <tr class="cat"><td class="gut"><svg width="9" height="9"><use href="#minus"/></svg></td><th colspan="2">基本</th></tr>
            <tr><td class="gut"></td><th>名称</th><td>体着色</td></tr>
            <tr><td class="gut"></td><th>说明</th><td>将视口设置为体着色：<span class="lat"> SHADEMODE</span></td></tr>
            <tr class="cat"><td class="gut"><svg width="9" height="9"><use href="#minus"/></svg></td><th colspan="2">宏</th></tr>
            <tr><td class="gut"></td><th>宏</th><td class="lat">$M=$(if,$(or,$(and,$(eq,$(getvar,"tilemode"</td></tr>
            <tr class="cat"><td class="gut"><svg width="9" height="9"><use href="#minus"/></svg></td><th colspan="2">高级</th></tr>
            <tr class="dim"><td class="gut"></td><th>元素<span class="lat"> ID</span></th><td class="lat">ID_Gouraud</td></tr>
            <tr class="cat"><td class="gut"><svg width="9" height="9"><use href="#minus"/></svg></td><th colspan="2">图像</th></tr>
            <tr><td class="gut"></td><th>小图像</th><td class="lat">RCDATA_16_GOURAUD</td></tr>
            <tr><td class="gut"></td><th>大图像</th><td class="lat">RCDATA_16_GOURAUD</td></tr>
            </tbody>
          </table>
        </div>
        <div class="hint">基本</div>
      </div>
    </section>
  </main>

  <footer class="foot d-flex">
    <div class="more flex-shrink-1">
      <div class="d-flex align-items-center gap-2"><svg class="ic" viewBox="0 0 16 16"><rect x=".5" y="1.500" width="13" height="13" rx="2" fill="#f4f8fc" stroke="#88a8d0"/><path d="M6 5h2v7M5 12h5" stroke="#555" stroke-width="1.500" fill="none"/></svg><a href="#">了解关于自定义的详细信息</a></div>
      <span class="wm wm-a">上传于 <b>CAD</b>世界网</span>
      <span class="wm wm-b">bbs.icad.com.cn</span>
    </div>
    <div class="d-flex flex-fill justify-content-end acts">
      <button type="button" class="btn raised cmd">确定<span class="lat">(<u>O</u>)</span></button>
      <button type="button" class="btn raised cmd">取消<span class="lat">(<u>C</u>)</span></button>
      <button type="button" class="btn raised cmd">应用<span class="lat">(<u>A</u>)</span></button>
      <button type="button" class="btn raised cmd">帮助<span class="lat">(<u>H</u>)</span></button>
    </div>
  </footer>
</div>
</body>
</html>
